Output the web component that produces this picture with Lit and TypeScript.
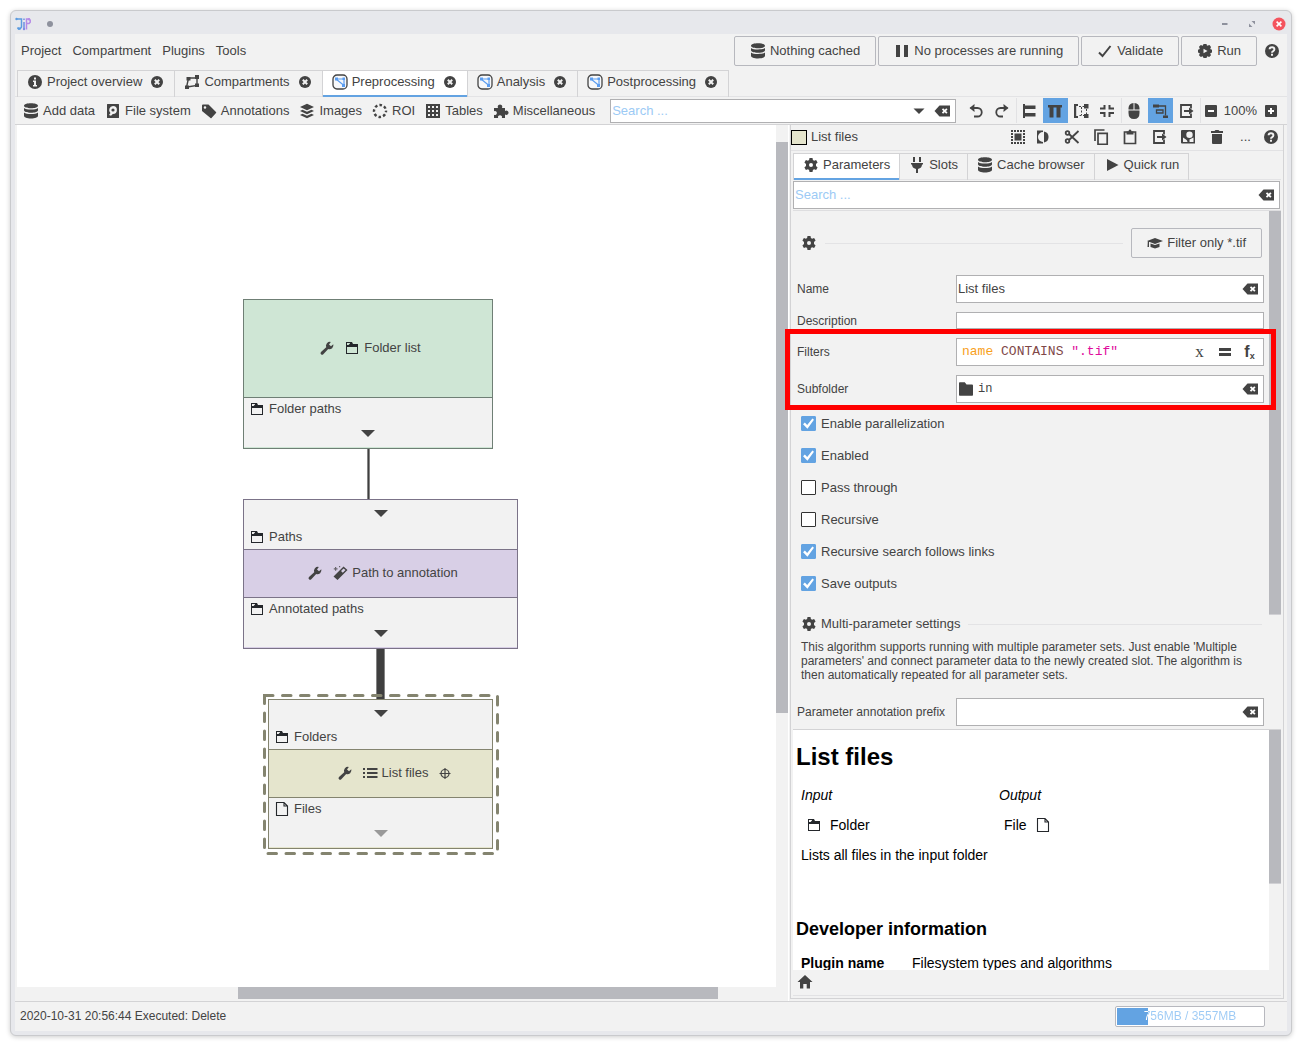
import { LitElement, html, css, svg, nothing } from "lit";
import type { TemplateResult, SVGTemplateResult } from "lit";
import { customElement, state } from "lit/decorators.js";
import { classMap } from "lit/directives/class-map.js";
import { styleMap } from "lit/directives/style-map.js";

/* Every icon is drawn on a 16 x 16 grid in currentColor. */
const ICONS: Record<string, SVGTemplateResult> = {
  logo: svg`
    <g fill="none" stroke-width="1.500">
      <path stroke="#5b9be0" d="M1 3h5.500v8l-1.500 2H3.500L2.500 11.500"/>
      <path stroke="#6f8fe4" d="M9 6v7.500M9 2.500v1.500"/>
      <path stroke="#b58ae6" d="M11.500 13.500V3h2.500l1.200 1.300v2L14 7.500h-2.500"/>
    </g>
    <circle cx="1.500" cy="3" r="1.200" fill="#5b9be0"/><circle cx="4" cy="12.500" r="1.200" fill="#5b9be0"/>
    <circle cx="9" cy="13" r="1.200" fill="#7f8de6"/><circle cx="14" cy="3.200" r="1.200" fill="#b58ae6"/>`,
  dot: svg`<circle cx="8" cy="8" r="3" fill="#8e919d"/>`,
  minimize: svg`<path fill="#8e919d" d="M5 7h5.500v2H5z"/>`,
  restore: svg`<path fill="#8e919d" d="M7.500 5H11v3.500zM5 7.500V11h3.500z"/>`,
  winclose: svg`<circle cx="8" cy="8" r="6.500" fill="#f4545e"/><path stroke="#fff" stroke-width="1.600" d="M5.600 5.600l4.800 4.800M10.400 5.600l-4.800 4.800"/>`,
  info: svg`<circle cx="8" cy="8" r="7"/><path fill="#f2f2f2" d="M7 3.500h2v2H7zM6 6.500h3V11h1v1.500H6V11h1V8H6z"/>`,
  close: svg`<circle cx="8" cy="8" r="6"/><path stroke="#f2f2f2" stroke-width="2" d="M5.800 5.800l4.400 4.400M10.200 5.800l-4.400 4.400"/>`,
  compartments: svg`<path fill="none" stroke="currentColor" stroke-width="1.400" d="M2.500 13.500L4.500 4H13v7.500L3 13"/><path d="M1 11.500h4V15H1zM2.500 3h4v3.500h-4zM11 1h4v4h-4zM11 9.500h4V13h-4z"/>`,
  graph: svg`<rect x="1" y="1" width="14" height="14" rx="4" fill="#f7f8fa" stroke="currentColor" stroke-width="1.300"/><path fill="none" stroke="#5b9df0" stroke-width="1.200" d="M4 5h8v6.500L4 5"/><path fill="#5b9df0" d="M3 3.500h3v3H3zM10.500 3.500h2.500v2.500h-2.500zM10 10h3v3h-3z"/>`,
  database: svg`<path d="M1 2.800C1 1.200 4 .3 8 .3s7 .9 7 2.500S12 5.300 8 5.300 1 4.400 1 2.800zM1 5c1.200 1.100 4 1.500 7 1.500S13.800 6.100 15 5v2.300c0 1.600-3 2.500-7 2.500S1 8.900 1 7.300zM1 9.500C2.200 10.600 5 11 8 11s5.800-.4 7-1.500v3.300c0 1.700-3 2.700-7 2.700s-7-1-7-2.700z"/>`,
  disk: svg`<path fill-rule="evenodd" d="M2.500 1h11q.5 0 .5.500v13q0 .5-.5.500h-11q-.5 0-.5-.500v-13q0-.5.500-.500zM8 3a4 4 0 0 0-2.500 7L4 12l2 .8 1.800-1.800A4 4 0 0 0 8 3z"/><circle cx="8" cy="7" r="1.600"/>`,
  tag: svg`<path fill-rule="evenodd" d="M1 2.500Q1 1.500 2 1.500h5.500L15 9q.5.500 0 1l-4.500 5q-.5.500-1 0L1 8zM4 3.200a1.300 1.300 0 1 0 0 2.600 1.300 1.300 0 0 0 0-2.600z"/>`,
  layers: svg`<path d="M8 .8l7 3.200-7 3.300L1 4zM1 8l2.500-1.300L8 8.700l4.500-2L15 8l-7 3.300zM1 12l2.500-1.300L8 12.700l4.500-2L15 12l-7 3.300z"/>`,
  roi: svg`<circle cx="8" cy="8" r="6" fill="none" stroke="currentColor" stroke-width="2.400" stroke-dasharray="2.600 2.112" stroke-dashoffset="1.300"/>`,
  table: svg`<path d="M1 1h14v14H1z"/><path fill="#f2f2f2" d="M3 3h2v2H3zM7 3h2v2H7zM11 3h2v2h-2zM3 7h2v2H3zM7 7h2v2H7zM11 7h2v2h-2zM3 11h2v2H3zM7 11h2v2H7zM11 11h2v2h-2z"/>`,
  puzzle: svg`<path d="M1 5h4.200a2.200 2.200 0 1 1 3.600 0H12v3a2.200 2.200 0 1 1 0 3.600V15H8.800a2 2 0 1 0-3.600 0H1v-3.200a2 2 0 1 0 0-3.600z"/>`,
  caret: svg`<path d="M2.500 5.500h11L8 11z"/>`,
  clear: svg`<path d="M5.500 2.500H16v11H5.500L.500 8z"/><path stroke="#fff" stroke-width="1.800" d="M8.500 5.800l4.400 4.400M12.900 5.800l-4.400 4.400"/>`,
  undo: svg`<path fill="none" stroke="currentColor" stroke-width="1.800" d="M2.500 5H9.500a4 4 0 0 1 0 8.500H6"/><path d="M6.500 1v2.500L4.500 5l2 1.500V9L1.500 5z"/>`,
  redo: svg`<path fill="none" stroke="currentColor" stroke-width="1.800" d="M13.500 5H6.500a4 4 0 0 0 0 8.500H9"/><path d="M9.500 1v2.500L11.500 5l-2 1.500V9L14.500 5z"/>`,
  alignleft: svg`<path d="M2 1h2v14H2zM4 2.500h10.500v3.500H4zM4 10h10.500v3.500H4z"/>`,
  aligntop: svg`<path d="M1 2h14v2.500h-1.500v10h-4v-10h-3v10h-4v-10H1z"/>`,
  autolayout: svg`<path d="M1 1h4v2H3.200v10H5v2H1zM11 1h4.500v4.500H11zM11 11h4.500v4H11z"/><path fill="none" stroke="currentColor" stroke-dasharray="2 1.500" d="M6 3.500h5M6.500 12.500H11M13.500 6v5M8.500 4v8"/>`,
  compress: svg`<path d="M4.500 2h2v4.500H1v-2h3.500zM9.500 2h2v2.500H15v2H9.500zM1 9h5.500v5h-2v-3H1zM9.500 9H15v2h-3.500v3h-2z"/>`,
  mouse: svg`<path d="M7.500 0v6.500H2.500V5q.3-4.500 5-5zM8.500 0q4.700.5 5 5v1.500h-5zM2.500 7.500h11V10q0 6-5.500 6t-5.500-6z"/>`,
  edges: svg`<path d="M1 1.500h6v3H1zM11 12.500h5V15h-5z"/><path fill="none" stroke="currentColor" stroke-width="1.300" d="M7 3h6.500v9.500M4.500 7h6.500v3H4.500z"/>`,
  exportbox: svg`<path fill="none" stroke="currentColor" stroke-width="1.800" d="M13 5.500V2H3v12h10v-3.500"/><path d="M6 7h5V4.500L15.500 8 11 11.500V9H6z"/>`,
  minus: svg`<rect x="2" y="2" width="12" height="12" rx="1"/><path fill="#fff" d="M5 7h6v2H5z"/>`,
  plus: svg`<rect x="2" y="2" width="12" height="12" rx="1"/><path fill="#fff" d="M5 7h2V5h2v2h2v2H9v2H7V9H5z"/>`,
  selectall: svg`<path d="M4.500 4.500h7v7h-7z"/><path stroke="currentColor" stroke-width="2" stroke-dasharray="2 1" d="M1 2h14M1 14h14M2 4v8M14 4v8"/>`,
  invert: svg`<path d="M2 1.500h6v1.500a5 5 0 0 0 0 10v1.500H2z"/><path d="M9 2.500a5.600 5.600 0 0 1 0 11z"/>`,
  cut: svg`<g fill="none" stroke="currentColor" stroke-width="1.800"><circle cx="3.500" cy="4" r="1.800"/><circle cx="3.500" cy="12" r="1.800"/><path d="M5 5l9.500 9M5 11l9.500-9"/></g>`,
  copy: svg`<path fill="none" stroke="currentColor" stroke-width="1.700" d="M5 4.300h9.200v11H5zM2 12V1h9.500"/>`,
  paste: svg`<path fill="none" stroke="currentColor" stroke-width="1.700" d="M2.500 3h11v11.500h-11z"/><path d="M4.500 2.500h2a1.500 2 0 0 1 3 0h2v3h-7z"/>`,
  template: svg`<path fill-rule="evenodd" d="M2 1h13v13.500H2q-1 0-1-1V2q0-1 1-1zM3 8.500v4.500h4.500q-.2-2-1.500-2.500zM9.500 2.500a3.200 3.200 0 1 0 0 6.400 3.200 3.200 0 0 0 0-6.400z"/><path fill="#f2f2f2" d="M9.500 10.500l4-2v4.500h-4z"/>`,
  trash: svg`<path d="M2 2h3.500l1-1h3l1 1H14v2H2zM3 5h10v9q0 1-1 1H4q-1 0-1-1z"/>`,
  help: svg`<circle cx="8" cy="8" r="7"/><path fill="none" stroke="#f2f2f2" stroke-width="1.900" d="M5.600 6.300Q5.600 4.200 8 4.200t2.400 2q0 1.200-1.200 1.900Q8 8.700 8 9.800"/><path fill="#f2f2f2" d="M7 10.800h2v1.900H7z"/>`,
  gear: svg`<path fill-rule="evenodd" d="M6.500 1h3l.4 2.100 1.200.6 2-.8 1.500 2.600-1.600 1.400v2.200l1.600 1.400-1.500 2.600-2-.8-1.200.6L9.500 15h-3l-.4-2.100-1.200-.6-2 .8-1.500-2.600L3 9.100V6.900L1.400 5.500l1.500-2.600 2 .8 1.200-.6zM8 6a2 2 0 1 0 0 4 2 2 0 0 0 0-4z"/>`,
  rungear: svg`<path fill-rule="evenodd" d="M6.500 1h3l.5 1.800 2.500-.8 1.500 2-.8 2 1.800.8v2.700l-1.800.8.800 2-1.800 1.700-2-.8-.7 1.800h-3l-.7-1.800-2 .8L2 12.200l.8-2L1 9.500V6.800L2.800 6 2 3.800 3.800 2l2 .8zM6.500 5.800v4.400L10.500 8z"/>`,
  plug: svg`<path d="M4 0h2v5H4zM10 0h2v5h-2zM2 6h12v1.500h-1Q13 11 9 12v4H7v-4Q3 11 3 7.500H2z"/>`,
  play: svg`<path d="M3 2l11.500 6L3 14z"/>`,
  pause: svg`<path d="M2 2h4v12H2zM10 2h4v12h-4z"/>`,
  check: svg`<path fill="none" stroke="currentColor" stroke-width="2" d="M2 9.500l3.500 3.500L13.500 3"/>`,
  graduation: svg`<path d="M0 6l8-3 8 3-8 3zM3.500 8.500L8 10l4.500-1.500V12L8 13.500 3.500 12zM.8 6.500H2V12H.5z"/>`,
  folder: svg`<path d="M1 2q0-.8.8-.8h5L8.500 3.500H14q1 0 1 1V14q0 .8-.8.800H1.800Q1 14.800 1 14z"/>`,
  equals: svg`<path d="M2 4h12v3H2zM2 9h12v3H2z"/>`,
  home: svg`<path d="M8 1l7.500 7H13v6.500H9.700V10H6.300v4.500H3V8H.500z"/>`,
  wrench: svg`<path d="M14.300 4.300l-2.300 1.900-2-1.800 1.800-2.500a4 4 0 0 0-4.600 5.300L2 12a1.500 1.500 0 0 0 2.300 2.200l4.900-5.100a4 4 0 0 0 5.100-4.800z"/>`,
  folderline: svg`<path fill="#24272b" fill-rule="evenodd" d="M2 2h6l1 2h5v10H2zm1 1v2l1.500 0L6 3.500 6 3zM3 7v6h10V7z"/>`,
  fileline: svg`<path fill="none" stroke="#24272b" stroke-width="1.100" d="M2.500 1.500h7.500l3.500 3.500v9.500h-11zM10 1.500V5h3.500"/>`,
  magic: svg`<path fill-rule="evenodd" d="M11.500 1.500L15.500 5 5.500 15 1.500 11.500zM11.500 3.500L9 6l1.800 1.700L13.500 5z"/><path d="M3 2h1.200v1.200H5.500v1.300H4.200v1.300H3V4.500H1.800V3.200H3zM7 1h1.200v1.200H7z" opacity=".75"/>`,
  list: svg`<path d="M1 3h2v2H1zM5 3h10.500v2H5zM1 7h2v2H1zM5 7h10.500v2H5zM1 11h2v2H1zM5 11h10.500v2H5z"/>`,
  target: svg`<g fill="none" stroke="currentColor" stroke-width="1.200"><circle cx="8" cy="8.500" r="4"/><path d="M8 3v11M2.500 8.500h11"/></g>`,
};

const icon = (name: string): TemplateResult =>
  html`<svg class="icon" viewBox="0 0 16 16" width="16" height="16" fill="currentColor" aria-hidden="true">${ICONS[name]}</svg>`;

interface Tab {
  label: string;
  icon: string;
}

const MENUS = ["Project", "Compartment", "Plugins", "Tools"];

const ACTIONS: Tab[] = [
  { icon: "database", label: "Nothing cached" },
  { icon: "pause", label: "No processes are running" },
  { icon: "check", label: "Validate" },
  { icon: "rungear", label: "Run" },
];

const DOCUMENTS: Tab[] = [
  { icon: "info", label: "Project overview" },
  { icon: "compartments", label: "Compartments" },
  { icon: "graph", label: "Preprocessing" },
  { icon: "graph", label: "Analysis" },
  { icon: "graph", label: "Postprocessing" },
];

const CATEGORIES: Tab[] = [
  { icon: "database", label: "Add data" },
  { icon: "disk", label: "File system" },
  { icon: "tag", label: "Annotations" },
  { icon: "layers", label: "Images" },
  { icon: "roi", label: "ROI" },
  { icon: "table", label: "Tables" },
  { icon: "puzzle", label: "Miscellaneous" },
];

const PANELS: Tab[] = [
  { icon: "gear", label: "Parameters" },
  { icon: "plug", label: "Slots" },
  { icon: "database", label: "Cache browser" },
  { icon: "play", label: "Quick run" },
];

const NODE_TOOLS: Tab[] = [
  { icon: "selectall", label: "Select all" },
  { icon: "invert", label: "Invert selection" },
  { icon: "cut", label: "Cut" },
  { icon: "copy", label: "Copy" },
  { icon: "paste", label: "Paste" },
  { icon: "exportbox", label: "Export" },
  { icon: "template", label: "Isolate" },
  { icon: "trash", label: "Delete" },
];

@customElement("app-root")
export class AppRoot extends LitElement {
  @state() private activeDocument = 2;
  @state() private activePanel = 0;
  @state() private options = [
    { label: "Enable parallelization", on: true },
    { label: "Enabled", on: true },
    { label: "Pass through", on: false },
    { label: "Recursive", on: false },
    { label: "Recursive search follows links", on: true },
    { label: "Save outputs", on: true },
  ];

  static styles = css`
    :host {
      --bg: #f2f2f2;
      --ink: #434343;
      --line: #d3d3d5;
      --field: #b0b0b2;
      --blue: #63a3e2;
      --thumb: #b8b9be;
      display: block;
      box-sizing: border-box;
      height: 100vh;
      padding: 10px;
      background: #fff;
      color: var(--ink);
      font: 13px/16px "Liberation Sans", Arial, sans-serif;
    }
    *, *::before, *::after { box-sizing: border-box; }
    button, input {
      font: inherit;
      color: inherit;
      margin: 0;
      padding: 0;
      border: 0;
      background: none;
      border-radius: 0;
      outline: none;
    }
    button { display: inline-flex; align-items: center; justify-content: center; white-space: nowrap; cursor: default; }
    a { color: inherit; text-decoration: none; }
    .icon { display: block; flex: none; }
    .grow { flex: 1; min-width: 0; }

    .window {
      display: flex;
      flex-direction: column;
      height: 100%;
      border: 1px solid #c9cacd;
      border-radius: 6px;
      background: #e7e8ec;
      padding: 0 4px 4px;
      box-shadow: 0 1px 5px rgba(0, 0, 0, 0.2);
    }
    .titlebar { display: flex; align-items: center; height: 23px; flex: none; gap: 11px; padding: 2px 0 0; }
    .content { display: flex; flex-direction: column; flex: 1; min-height: 0; background: var(--bg); }

    .menubar { display: flex; align-items: flex-start; gap: 2px; height: 36px; flex: none; padding: 2px 7px 0 6px; }
    .menus { display: flex; align-items: center; gap: 11px; height: 30px; flex: 1; }
    .push {
      height: 30px;
      padding: 0 15px;
      gap: 4px;
      border: 1px solid #b7b8be;
      border-radius: 2px;
    }
    .menubar .help { height: 30px; margin-left: 5px; }

    .tabs { display: flex; flex: none; height: 27px; border-bottom: 1px solid #e3e3e5; }
    .tab {
      display: flex;
      align-items: center;
      height: 27px;
      padding: 0 9px 4px 9px;
      gap: 4px;
      border: 0 solid var(--line);
      border-width: 1px 0 0 1px;
      white-space: nowrap;
    }
    .tab:last-child { border-right-width: 1px; }
    .tab.active { background: #fff; box-shadow: inset 0 -2px 0 var(--blue); }
    .tab .select { gap: 4px; }
    .tab .x { margin-left: 3px; }
    .documents { padding-left: 2px; }

    .toolbar { display: flex; align-items: center; flex: none; height: 28px; padding: 0 6px 0 3px; border-bottom: 1px solid var(--line); }
    .category { height: 26px; padding: 0 5px; gap: 4px; }
    .search {
      display: flex;
      align-items: center;
      height: 24px;
      padding-right: 5px;
      gap: 7px;
      border: 1px solid var(--field);
      background: #fff;
    }
    .search input { flex: 1; min-width: 0; height: 22px; padding-left: 1px; }
    .search input::placeholder { color: #9ccaf5; opacity: 1; }
    .toolbar .search { flex: 1; min-width: 0; margin: 0 8px 0 10px; }
    .tool { width: 25px; height: 25px; margin-right: 1px; flex: none; }
    .tool.small { width: 21px; margin-right: 0; }
    .tool.on { background: var(--blue); }
    .rule { width: 1px; height: 25px; background: #e2e2e4; flex: none; }
    .percent { padding: 0 3px 0 2px; }

    .work { display: flex; flex: 1; min-height: 0; }
    .graph {
      flex: 1;
      min-width: 0;
      display: grid;
      grid-template: minmax(0, 1fr) 12px / minmax(0, 1fr) 12px;
      padding: 0 0 2px 2px;
      border-right: 1px solid #fff;
    }
    .canvas { position: relative; overflow: hidden; background: #fff; }
    .vbar { display: flex; flex-direction: column; padding-top: 17px; }
    .hbar { display: flex; padding-left: 221px; }
    .vbar .thumb { height: 571px; background: var(--thumb); }
    .hbar .thumb { width: 480px; background: var(--thumb); }

    .wires { position: absolute; left: 0; top: 0; }
    .node {
      position: absolute;
      display: flex;
      flex-direction: column;
      height: 150px;
      border: 1px solid var(--edge);
      background: var(--fill);
      padding-bottom: 1px;
    }
    .n1 { left: 226px; top: 174px; width: 250px; --edge: #6f7f75; --fill: #cfe6d5; }
    .n2 { left: 226px; top: 374px; width: 275px; --edge: #7b7388; --fill: #d8cfe6; }
    .n3 { left: 251px; top: 574px; width: 225px; --edge: #84846f; --fill: #e5e5cd; }
    .slot { display: flex; flex-direction: column; background: var(--bg); height: 49px; flex: none; }
    .slot .port { display: flex; align-items: center; gap: 4px; height: 22px; padding-left: 5px; }
    .slot .arrow { display: flex; justify-content: center; align-items: center; height: 26px; }
    .slot .port + .arrow { height: 28px; }
    .slot .faint { opacity: 0.5; }
    .title {
      flex: 1;
      display: grid;
      grid-template-columns: 1fr auto 1fr;
      align-items: center;
      padding: 0 0 2px 4px;
      white-space: nowrap;
    }
    .title .name { grid-column: 2; display: flex; align-items: center; gap: 4px; }
    .title .name .icon:first-child { margin-right: 5px; }
    .title > .icon { margin-left: 9px; }
    .slot + .title { border-top: 1px solid var(--edge); }
    .title + .slot { border-top: 1px solid var(--edge); height: 50px; }

    .side {
      display: flex;
      flex-direction: column;
      width: 494px;
      flex: none;
      margin: 0 3px 2px 1px;
      border: 1px solid var(--line);
      border-top: 0;
    }
    .sidehead { display: flex; align-items: center; height: 26px; flex: none; padding: 0 2px 1px 0; border-bottom: 1px solid #e2e2e4; }
    .swatch { width: 16px; height: 15px; border: 1px solid #000; background: #e5e5cd; margin-right: 4px; }
    .nodetool { width: 29px; height: 24px; }
    .nodetool.narrow { width: 21px; }
    .panel { display: flex; flex-direction: column; flex: 1; min-height: 0; padding: 2px; }
    .panel .search { height: 28px; flex: none; margin: 1px 1px 0 0; }
    .panel .search input { height: 24px; padding-bottom: 1px; }

    .scrollpane { display: flex; flex: none; margin-top: 1px; border-top: 1px solid #dedee0; }
    .scrollpane > .body { flex: 1; min-width: 0; }
    .scrollpane > .track { width: 12px; flex: none; }
    .track .thumb { background: var(--thumb); border-bottom: 1px solid #d0d0d4; }
    .params .thumb { height: 404px; }
    .doc .thumb { height: 154px; }
    .params .body { padding: 17px 5px 3px 4px; }
    .section { display: flex; align-items: center; gap: 8px; padding: 0 2px 0 4px; }
    .section hr { flex: 1; height: 1px; border: 0; margin: 0; background: #e3e3e5; }
    .section .grouptitle { font-weight: 400; margin: 0 0 0 -4px; font-size: 13px; }
    .section.first { height: 30px; margin-bottom: 17px; }
    .section.second { height: 24px; margin-top: 12px; margin-bottom: 4px; }
    .row { display: grid; grid-template-columns: 159px minmax(0, 1fr); align-items: center; margin-bottom: 9px; }
    .row .caption { font-size: 12px; white-space: nowrap; }
    .field { display: flex; align-items: center; height: 28px; border: 1px solid var(--field); background: #fff; padding-right: 5px; }
    .field.small { height: 17px; }
    .field.code { padding-right: 1px; }
    .field input { flex: 1; min-width: 0; width: 100%; height: 100%; padding: 0 0 1px 1px; }
    .field .path { font: 12px/16px "Liberation Mono", monospace; padding-left: 4px; }
    .field > .icon { margin-left: 1px; }
    .editor { flex: 1; padding-left: 5px; font: 13px/16px "Liberation Mono", monospace; outline: none; white-space: pre; }
    .variable { color: #f8a01c; }
    .keyword { color: #804848; }
    .string { color: #e00c9c; }
    .op { width: 25px; height: 24px; }
    .serif { font: 17px/16px "Liberation Serif", serif; }
    .fn { font: bold 16px/16px "Liberation Sans", sans-serif; }
    .fn sub { font-size: 9px; line-height: 8px; vertical-align: -2px; }
    .marked { position: relative; }
    .marked .row:last-child { margin-bottom: 0; }
    .marked::after {
      content: "";
      position: absolute;
      inset: -9px -12px -7px -12px;
      border: 5px solid #f00;
      pointer-events: none;
    }
    .checks { margin-top: 5px; }
    .check { display: flex; align-items: center; gap: 5px; height: 32px; padding: 0 0 1px 4px; }
    .check input { appearance: none; width: 15px; height: 15px; border: 1px solid #333; border-radius: 1px; background: #fff; }
    .check input:checked { border-color: var(--blue); background: var(--blue); }
    .check input:checked::after {
      content: "";
      display: block;
      width: 13px;
      height: 13px;
      background: #fff;
      clip-path: polygon(8% 55%, 22% 43%, 40% 62%, 80% 12%, 92% 22%, 42% 90%);
    }
    .note { margin: 0 0 16px 4px; font-size: 12px; line-height: 14px; }
    .params .body > .row:last-child { margin-bottom: 0; }

    .doc { flex: 1; min-height: 0; overflow: hidden; border-top-color: var(--line); color: #000; font-size: 14px; margin-top: 0; }
    .doc .body { background: #fff; padding: 13px 3px 0; overflow: hidden; }
    .doc h1 { margin: 0 0 16px; font-size: 24px; line-height: 28px; }
    .doc h2 { margin: 55px 0 15px; font-size: 18px; line-height: 22px; }
    .doc p { margin: 14px 5px 0; line-height: 16px; }
    .doc table { border-collapse: collapse; margin-left: 5px; }
    .doc th, .doc td { padding: 0; text-align: left; }
    .io th { width: 198px; font-weight: 400; font-style: italic; }
    .io td { padding-top: 14px; }
    .io .in, .io .out { display: flex; align-items: center; gap: 8px; padding-left: 5px; }
    .meta th { width: 111px; }
    .homebar { display: flex; align-items: center; height: 26px; flex: none; padding: 0 0 1px 4px; border-bottom: 1px solid #e2e2e4; }

    .status { display: flex; align-items: center; justify-content: space-between; height: 30px; flex: none; padding: 0 22px 0 5px; border-top: 1px solid var(--line); font-size: 12px; }
    .status .message { padding-bottom: 2px; }
    .memory { width: 150px; height: 21px; border: 1px solid #b7b8be; border-radius: 2px; background: #fff; padding: 1px; }
    .memory .bar {
      display: block;
      height: 17px;
      background: linear-gradient(to right, var(--blue) var(--used), #fff var(--used));
    }
    .memory .value {
      display: block;
      text-align: center;
      line-height: 16px;
      color: transparent;
      background: linear-gradient(to right, #fff var(--used), #9ccaf5 var(--used));
      background-clip: text;
      -webkit-background-clip: text;
    }
  `;

  private toggle(index: number) {
    this.options = this.options.map((o, i) => (i === index ? { ...o, on: !o.on } : o));
  }

  private tool(name: string, label: string, on = false, small = false) {
    return html`<button class=${classMap({ tool: true, on, small })} aria-label=${label} title=${label}>${icon(name)}</button>`;
  }

  private slotRow(kind: "in" | "out", glyph: string, label: string, faint = false) {
    const port = html`<div class="port">${icon(glyph)}<span>${label}</span></div>`;
    const arrow = html`<div class=${classMap({ arrow: true, faint })}>
      <svg class="icon" width="14" height="7" viewBox="0 0 14 7" fill="currentColor"><path d="M0 0h14L7 7z" /></svg>
    </div>`;
    return html`<div class="slot">${kind === "in" ? [arrow, port] : [port, arrow]}</div>`;
  }

  private nodeTitle(glyph: string, label: string, targeted = false) {
    return html`<div class="title">
      <div class="name">${icon("wrench")}${icon(glyph)}<span>${label}</span></div>
      ${targeted ? icon("target") : nothing}
    </div>`;
  }

  private renderGraph() {
    return html`<section class="graph">
      <div class="canvas">
        <div class="node n1">
          ${this.nodeTitle("folderline", "Folder list")} ${this.slotRow("out", "folderline", "Folder paths")}
        </div>
        <div class="node n2">
          ${this.slotRow("in", "folderline", "Paths")} ${this.nodeTitle("magic", "Path to annotation")}
          ${this.slotRow("out", "folderline", "Annotated paths")}
        </div>
        <div class="node n3">
          ${this.slotRow("in", "folderline", "Folders")} ${this.nodeTitle("list", "List files", true)}
          ${this.slotRow("out", "fileline", "Files", true)}
        </div>
        <svg class="wires" width="500" height="740" aria-hidden="true">
          <path fill="#858585" d="M350 324h3v50h-3zM359 524h9v50h-9z" />
          <path fill="#3f3f3f" d="M351 324h1v50h-1zM360 524h7v50h-7z" />
          <rect x="247.500" y="570.500" width="233" height="158" fill="none" stroke="#84846f" stroke-width="3" stroke-linecap="round" stroke-dasharray="8.500 9.500" />
        </svg>
      </div>
      <div class="vbar"><div class="thumb"></div></div>
      <div class="hbar"><div class="thumb"></div></div>
    </section>`;
  }

  private renderParameters() {
    return html`<div class="scrollpane params">
      <div class="body">
        <div class="section first">
          ${icon("gear")}
          <hr />
          <button class="push">${icon("graduation")}Filter only *.tif</button>
        </div>
        <div class="row">
          <label class="caption" for="name">Name</label>
          <div class="field"><input id="name" .value=${"List files"} /><button aria-label="Clear name">${icon("clear")}</button></div>
        </div>
        <div class="row">
          <label class="caption" for="description">Description</label>
          <div class="field small"><input id="description" /></div>
        </div>
        <div class="marked">
          <div class="row">
            <span class="caption" id="filters">Filters</span>
            <div class="field code">
              <div class="editor" contenteditable="true" spellcheck="false" role="textbox" aria-labelledby="filters"><span class="variable">name</span> <span class="keyword">CONTAINS</span> <span class="string">".tif"</span></div>
              <button class="op serif" aria-label="Insert variable">x</button>
              <button class="op" aria-label="Insert operator">${icon("equals")}</button>
              <button class="op fn" aria-label="Insert function"><span>f<sub>x</sub></span></button>
            </div>
          </div>
          <div class="row">
            <label class="caption" for="subfolder">Subfolder</label>
            <div class="field">${icon("folder")}<input id="subfolder" class="path" .value=${"in"} /><button aria-label="Clear subfolder">${icon("clear")}</button></div>
          </div>
        </div>
        <div class="checks">
          ${this.options.map(
            (o, i) => html`<label class="check"><input type="checkbox" .checked=${o.on} @change=${() => this.toggle(i)} />${o.label}</label>`
          )}
        </div>
        <div class="section second">
          ${icon("gear")}
          <h3 class="grouptitle">Multi-parameter settings</h3>
          <hr />
        </div>
        <p class="note">
          This algorithm supports running with multiple parameter sets. Just enable 'Multiple parameters' and connect
          parameter data to the newly created slot. The algorithm is then automatically repeated for all parameter sets.
        </p>
        <div class="row">
          <label class="caption" for="prefix">Parameter annotation prefix</label>
          <div class="field"><input id="prefix" /><button aria-label="Clear prefix">${icon("clear")}</button></div>
        </div>
      </div>
      <div class="track"><div class="thumb"></div></div>
    </div>`;
  }

  private renderDocumentation() {
    return html`<div class="scrollpane doc">
      <article class="body">
        <h1>List files</h1>
        <table class="io">
          <tr><th>Input</th><th>Output</th></tr>
          <tr>
            <td><div class="in">${icon("folderline")}Folder</div></td>
            <td><div class="out">File${icon("fileline")}</div></td>
          </tr>
        </table>
        <p>Lists all files in the input folder</p>
        <h2>Developer information</h2>
        <table class="meta">
          <tr><th>Plugin name</th><td>Filesystem types and algorithms</td></tr>
        </table>
      </article>
      <div class="track"><div class="thumb"></div></div>
    </div>`;
  }

  private renderSide() {
    return html`<aside class="side">
      <div class="sidehead">
        <span class="swatch"></span><span class="grow">List files</span>
        ${NODE_TOOLS.map(
          (t, i) => html`<button class=${classMap({ nodetool: true, narrow: i === 0 })} aria-label=${t.label} title=${t.label}>${icon(t.icon)}</button>`
        )}
        <button class="nodetool">...</button>
        <button class="nodetool narrow" aria-label="Help">${icon("help")}</button>
      </div>
      <div class="panel">
        <nav class="tabs">
          ${PANELS.map(
            (t, i) => html`<button class=${classMap({ tab: true, active: i === this.activePanel })} @click=${() => (this.activePanel = i)}>${icon(t.icon)}${t.label}</button>`
          )}
        </nav>
        <div class="search">
          <input aria-label="Search parameters" placeholder="Search ..." /><button aria-label="Clear search">${icon("clear")}</button>
        </div>
        ${this.renderParameters()} ${this.renderDocumentation()}
        <div class="homebar"><button aria-label="Home">${icon("home")}</button></div>
      </div>
    </aside>`;
  }

  render() {
    return html`<main class="window">
      <header class="titlebar">
        ${icon("logo")}${icon("dot")}<span class="grow"></span>
        <button aria-label="Minimize">${icon("minimize")}</button>
        <button aria-label="Restore">${icon("restore")}</button>
        <button aria-label="Close window">${icon("winclose")}</button>
      </header>
      <div class="content">
        <div class="menubar">
          <nav class="menus">${MENUS.map((m) => html`<a href="#${m.toLowerCase()}">${m}</a>`)}</nav>
          ${ACTIONS.map((a) => html`<button class="push">${icon(a.icon)}${a.label}</button>`)}
          <button class="help" aria-label="Help">${icon("help")}</button>
        </div>
        <nav class="tabs documents">
          ${DOCUMENTS.map(
            (d, i) => html`<div class=${classMap({ tab: true, active: i === this.activeDocument })}>
              <button class="select" @click=${() => (this.activeDocument = i)}>${icon(d.icon)}${d.label}</button>
              <button class="x" aria-label="Close ${d.label}">${icon("close")}</button>
            </div>`
          )}
        </nav>
        <div class="toolbar">
          ${CATEGORIES.map((c) => html`<button class="category">${icon(c.icon)}${c.label}</button>`)}
          <div class="search">
            <input aria-label="Search nodes" placeholder="Search ..." />
            <button aria-label="Show results">${icon("caret")}</button>
            <button aria-label="Clear search">${icon("clear")}</button>
          </div>
          ${this.tool("undo", "Undo")}${this.tool("redo", "Redo")}
          <span class="rule"></span>
          ${this.tool("alignleft", "Vertical layout")}${this.tool("aligntop", "Horizontal layout", true)}
          ${this.tool("autolayout", "Auto layout")}${this.tool("compress", "Center view")}
          <span class="rule"></span>
          ${this.tool("mouse", "Follow mouse")}${this.tool("edges", "Draw edges", true)}${this.tool("exportbox", "Export image")}
          <span class="rule"></span>
          ${this.tool("minus", "Zoom out", false, true)}<span class="percent">100%</span>${this.tool("plus", "Zoom in", false, true)}
        </div>
        <div class="work">${this.renderGraph()}${this.renderSide()}</div>
        <footer class="status">
          <span class="message">2020-10-31 20:56:44 Executed: Delete</span>
          <div class="memory" role="progressbar" aria-label="Memory" aria-valuemin="0" aria-valuemax="3557" aria-valuenow="756">
            <span class="bar" style=${styleMap({ "--used": `${Math.round((756 / 3557) * 100)}%` })}><span class="value">756MB / 3557MB</span></span>
          </div>
        </footer>
      </div>
    </main>`;
  }
}
